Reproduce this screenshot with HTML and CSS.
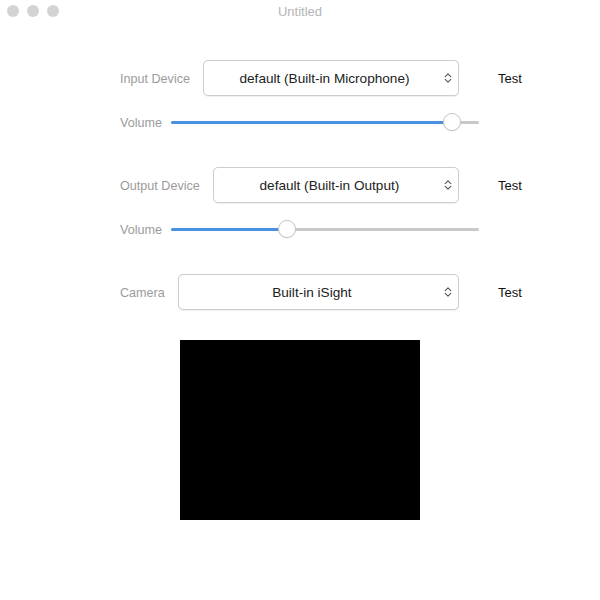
FILE: index.html
```html
<!DOCTYPE html>
<html>
<head>
<meta charset="utf-8">
<link rel="stylesheet" href="styles.css">
</head>
<body>
<div class="titlebar">
  <div class="lights"><span class="light"></span><span class="light"></span><span class="light"></span></div>
  <div class="title">Untitled</div>
</div>
<div class="content">
  <div class="row">
    <div class="field">
      <span class="label">Input Device</span>
      <div class="select"><span class="sel-text">default (Built-in Microphone)</span><svg class="chev" width="8" height="12" viewBox="0 0 8 12"><path d="M1.2 4.6 L4 1.8 L6.8 4.6 M1.2 7.4 L4 10.2 L6.8 7.4" fill="none" stroke="#555" stroke-width="1.1" stroke-linecap="round" stroke-linejoin="round"/></svg></div>
    </div>
    <span class="test">Test</span>
  </div>
  <div class="vol-row">
    <span class="label">Volume</span>
    <div class="track"><div class="fill" style="width:91.2%"></div><div class="thumb" style="left:91.2%"></div></div>
  </div>

  <div class="row row-gap">
    <div class="field">
      <span class="label">Output Device</span>
      <div class="select"><span class="sel-text">default (Built-in Output)</span><svg class="chev" width="8" height="12" viewBox="0 0 8 12"><path d="M1.2 4.6 L4 1.8 L6.8 4.6 M1.2 7.4 L4 10.2 L6.8 7.4" fill="none" stroke="#555" stroke-width="1.1" stroke-linecap="round" stroke-linejoin="round"/></svg></div>
    </div>
    <span class="test">Test</span>
  </div>
  <div class="vol-row">
    <span class="label">Volume</span>
    <div class="track"><div class="fill" style="width:37.7%"></div><div class="thumb" style="left:37.7%"></div></div>
  </div>

  <div class="row row-gap">
    <div class="field">
      <span class="label">Camera</span>
      <div class="select"><span class="sel-text">Built-in iSight</span><svg class="chev" width="8" height="12" viewBox="0 0 8 12"><path d="M1.2 4.6 L4 1.8 L6.8 4.6 M1.2 7.4 L4 10.2 L6.8 7.4" fill="none" stroke="#555" stroke-width="1.1" stroke-linecap="round" stroke-linejoin="round"/></svg></div>
    </div>
    <span class="test">Test</span>
  </div>
</div>
<div class="video"></div>
</body>
</html>
```
FILE: styles.css
```css
html, body {
  margin: 0;
  padding: 0;
  background: #ffffff;
  font-family: "Liberation Sans", Arial, sans-serif;
  font-size: 13px;
  color: #1a1a1a;
}
.titlebar {
  height: 22px;
  display: flex;
  align-items: center;
  justify-content: center;
  position: relative;
}
.lights {
  position: absolute;
  left: 7px;
  top: 5px;
  display: flex;
  gap: 8px;
}
.light {
  width: 12px;
  height: 12px;
  border-radius: 50%;
  background: #d3d3d3;
}
.title {
  color: #b4b4b4;
  font-size: 13px;
}
.content {
  padding-left: 120px;
  padding-top: 38px;
}
.row {
  display: flex;
  align-items: center;
  height: 36px;
}
.row-gap {
  margin-top: 35px;
}
.field {
  display: flex;
  align-items: center;
  width: 339px;
  gap: 13px;
}
.label {
  color: #9b9b9b;
  white-space: nowrap;
  font-size: 12.6px;
  padding-top: 1px;
}
.select {
  flex: 1;
  height: 34px;
  border: 1px solid #cdcdcd;
  border-radius: 5px;
  background: #fff;
  box-shadow: 0 0.5px 1px rgba(0,0,0,0.06);
  display: flex;
  align-items: center;
  position: relative;
}
.sel-text {
  flex: 1;
  text-align: center;
  padding-left: 8px;
  color: #222;
  font-size: 13.6px;
}
.chev {
  margin-right: 3px;
  margin-left: 4px;
  flex: none;
  width: 14px;
}
.test {
  margin-left: 39px;
  color: #111;
}
.vol-row {
  display: flex;
  align-items: center;
  width: 359px;
  height: 20px;
  margin-top: 16px;
  gap: 9px;
}
.track {
  flex: 1;
  height: 3px;
  border-radius: 2px;
  background: #c9c9c9;
  position: relative;
}
.fill {
  height: 3px;
  border-radius: 2px;
  background: #4a90e2;
}
.thumb {
  position: absolute;
  top: 50%;
  width: 16px;
  height: 16px;
  margin-left: -9px;
  margin-top: -9px;
  border-radius: 50%;
  background: #fff;
  border: 1px solid #c6c6c6;
  box-shadow: 0 0.5px 1px rgba(0,0,0,0.1);
}
.video {
  width: 240px;
  height: 180px;
  background: #000;
  margin: 30px auto 0;
}
```
